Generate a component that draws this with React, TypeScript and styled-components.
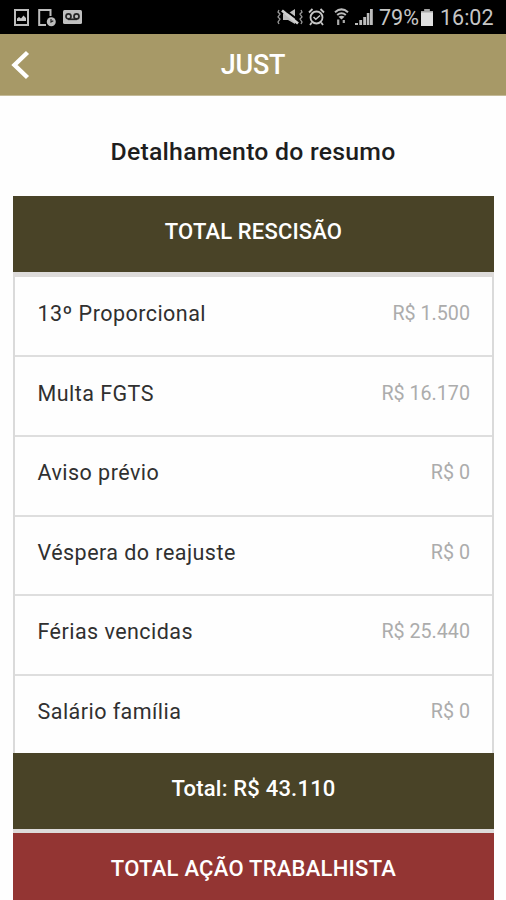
import React from 'react';
import styled, { createGlobalStyle } from 'styled-components';

const GlobalStyle = createGlobalStyle`
  * { box-sizing: border-box; }
  html, body, #root { margin: 0; padding: 0; }
  body { background: #fff; font-family: Roboto, sans-serif; overflow: hidden; }
`;

const Screen = styled.div`
  width: 506px;
  height: 900px;
  overflow: hidden;
  display: flex;
  flex-direction: column;
  background: #fefefe;
`;

const StatusBar = styled.div`
  flex: none;
  height: 34px;
  padding: 0 13px 0 14px;
  display: flex;
  justify-content: space-between;
  background: #000;
  color: #c6c6c6;
`;

const StatusGroup = styled.div`
  display: flex;
  align-items: center;
`;

const StatusIcon = styled.svg<{ $gap?: number }>`
  display: block;
  flex: none;
  margin-left: ${(p) => p.$gap ?? 0}px;
`;

const StatusText = styled.span<{ $gap: number; $width: number }>`
  width: ${(p) => p.$width}px;
  margin-left: ${(p) => p.$gap}px;
  font-size: 21.5px;
  line-height: 35px;
  white-space: nowrap;
`;

const AppBar = styled.header`
  flex: none;
  height: 62px;
  display: grid;
  grid-template-columns: 60px 1fr 60px;
  align-items: center;
  background: #a79967;
  border-bottom: 1px solid #c4ba98;
`;

const BackButton = styled.button`
  width: 60px;
  height: 61px;
  padding: 0 0 0 11px;
  border: 0;
  background: none;
  display: flex;
  align-items: center;
`;

const AppTitle = styled.h1`
  margin: 0;
  text-align: center;
  color: #fff;
  font-size: 27px;
  font-weight: 500;
  line-height: 60px;
  letter-spacing: -0.2px;
`;

const PageTitle = styled.h2`
  flex: none;
  margin: 0;
  height: 100px;
  padding-top: 12px;
  text-align: center;
  color: #1e1e1e;
  font-size: 24.8px;
  font-weight: 500;
  line-height: 88px;
  letter-spacing: 0.24px;
`;

const Summary = styled.section`
  flex: none;
  width: 481px;
  margin-left: 13px;
  display: flex;
  flex-direction: column;
`;

const Band = styled.div<{ $tone: 'olive' | 'red'; $spacing?: number }>`
  height: 75.5px;
  line-height: 72px;
  text-align: center;
  color: #fff;
  font-size: 22px;
  font-weight: 500;
  letter-spacing: ${(p) => p.$spacing ?? 0}px;
  background: ${(p) => (p.$tone === 'olive' ? '#494327' : '#933533')};
`;

const Divider = styled.div<{ $size: number }>`
  height: ${(p) => p.$size}px;
  background: #dddbda;
`;

const List = styled.ul`
  margin: 0;
  padding: 0;
  list-style: none;
  border: solid #dadada;
  border-width: 0 2px;
`;

const Row = styled.li<{ $height: number; $line: number; $last?: boolean }>`
  height: ${(p) => p.$height}px;
  line-height: ${(p) => p.$line}px;
  padding: 0 22px 0 22.5px;
  display: flex;
  justify-content: space-between;
  border-bottom: ${(p) => (p.$last ? 'none' : '2px solid #dedede')};
`;

const Label = styled.span`
  color: #303030;
  font-size: 21.5px;
  letter-spacing: 0.46px;
`;

const Amount = styled.span`
  color: #acacac;
  font-size: 19.7px;
`;

const rows = [
  { label: '13º Proporcional', amount: 'R$ 1.500', height: 80, line: 73 },
  { label: 'Multa FGTS', amount: 'R$ 16.170', height: 80, line: 73 },
  { label: 'Aviso prévio', amount: 'R$ 0', height: 80, line: 72 },
  { label: 'Véspera do reajuste', amount: 'R$ 0', height: 79, line: 72 },
  { label: 'Férias vencidas', amount: 'R$ 25.440', height: 80, line: 72 },
  { label: 'Salário família', amount: 'R$ 0', height: 77, line: 72 },
];

const PictureIcon = () => (
  <StatusIcon width="15" height="17" viewBox="0 0 15 17" fill="none">
    <rect x="1" y="1" width="13" height="15" stroke="#bdbdbd" strokeWidth="2" />
    <path d="M3 12V9.5l2-1.5 2 1.5 2.5-3L12 9v3z" fill="#c6c6c6" />
  </StatusIcon>
);

const DeviceIcon = () => (
  <StatusIcon $gap={9} width="19" height="19" viewBox="0 0 19 19" fill="none">
    <path d="M12.5 8V2H1.2v15H8" stroke="#bdbdbd" strokeWidth="2" />
    <circle cx="13.3" cy="13.7" r="4.5" fill="#bdbdbd" />
    <path d="M13 11v3l2.3-1.2" stroke="#222" strokeWidth="1.2" />
  </StatusIcon>
);

const VoicemailIcon = () => (
  <StatusIcon $gap={6} width="19" height="14" viewBox="0 0 19 14" fill="none">
    <rect width="19" height="14" rx="1.5" fill="#c0c0c0" />
    <g stroke="#252525" strokeWidth="1.7">
      <circle cx="5.5" cy="6.4" r="2.5" />
      <circle cx="13.5" cy="6.4" r="2.5" />
      <path d="M5 9.3h9" />
    </g>
  </StatusIcon>
);

const VibrateIcon = () => (
  <StatusIcon width="26" height="18" viewBox="0 0 26 18" fill="none">
    <path d="M2 2l-1 2 2 2-2 3 2 2-2 3 1 2M24 2l1 2-2 2 2 3-2 2 2 3-1 2" stroke="#999" strokeWidth="1.3" />
    <path d="M6 5.5h5l7-4.5v15l-7-4H6z" fill="#bdbdbd" />
    <path d="M6.5 1L20 11" stroke="#000" strokeWidth="2" />
    <path d="M5 2.5l16 13" stroke="#d0d0d0" strokeWidth="2.8" />
  </StatusIcon>
);

const AlarmIcon = () => (
  <StatusIcon $gap={5} width="17" height="18" viewBox="0 0 17 18" fill="none" stroke="#c6c6c6">
    <circle cx="8.5" cy="9.5" r="6" strokeWidth="1.8" />
    <path d="M1 4.5L4.5 1M16 4.5L12.5 1M3.8 14.5L2 17M13.2 14.5L15 17" strokeWidth="1.8" />
    <path d="M5.5 9l2.3 2.3L12 7.5" strokeWidth="1.5" />
  </StatusIcon>
);

const WifiIcon = () => (
  <StatusIcon $gap={9} width="15" height="18" viewBox="0 0 15 18" fill="none">
    <path d="M1 4.2Q7.5-1.3 14 4.2M3.2 7Q7.5 3.5 11.8 7" stroke="#bdbdbd" strokeWidth="2.1" />
    <path d="M4.5 8.7q3-2 6 0L7.5 11.5z" fill="#bdbdbd" />
    <path d="M4.2 11.5V17M9.8 12v3" stroke="#aaa" strokeWidth="2.2" />
  </StatusIcon>
);

const SignalIcon = () => (
  <StatusIcon $gap={6} width="18" height="18" viewBox="0 0 18 18">
    <path d="M0 15h3v2H0zM4.3 12h2.8v5H4.3zM8.2 9h2.9v8H8.2zM11.8 5h2.6v12h-2.6zM15 1h2.8v16H15z" fill="#bdbdbd" />
  </StatusIcon>
);

const BatteryIcon = () => (
  <StatusIcon $gap={3} width="12" height="17" viewBox="0 0 12 17">
    <path d="M3.5 0h5v2H12v15H0V2h3.5z" fill="#e0e0e0" />
    <path d="M0 2h3.5V0h5v2H12v1.5H0z" fill="#a5a5a5" />
  </StatusIcon>
);

export default function App() {
  return (
    <Screen>
      <GlobalStyle />
      <StatusBar>
        <StatusGroup>
          <PictureIcon />
          <DeviceIcon />
          <VoicemailIcon />
        </StatusGroup>
        <StatusGroup>
          <VibrateIcon />
          <AlarmIcon />
          <WifiIcon />
          <SignalIcon />
          <StatusText $gap={6} $width={39}>79%</StatusText>
          <BatteryIcon />
          <StatusText $gap={7} $width={53}>16:02</StatusText>
        </StatusGroup>
      </StatusBar>
      <AppBar>
        <BackButton aria-label="Voltar">
          <svg width="20" height="30" viewBox="0 0 20 30" fill="none">
            <path d="M16.5 2.5L3.5 15l13 12.5" stroke="#fff" strokeWidth="4.4" />
          </svg>
        </BackButton>
        <AppTitle>JUST</AppTitle>
      </AppBar>
      <PageTitle>Detalhamento do resumo</PageTitle>
      <Summary>
        <Band $tone="olive" $spacing={0.15}>TOTAL RESCISÃO</Band>
        <Divider $size={5.5} />
        <List>
          {rows.map((row, i) => (
            <Row key={row.label} $height={row.height} $line={row.line} $last={i === rows.length - 1}>
              <Label>{row.label}</Label>
              <Amount>{row.amount}</Amount>
            </Row>
          ))}
        </List>
        <Band $tone="olive" $spacing={0.2}>Total: R$ 43.110</Band>
        <Divider $size={4.5} />
        <Band $tone="red" $spacing={0.25}>TOTAL AÇÃO TRABALHISTA</Band>
      </Summary>
    </Screen>
  );
}
